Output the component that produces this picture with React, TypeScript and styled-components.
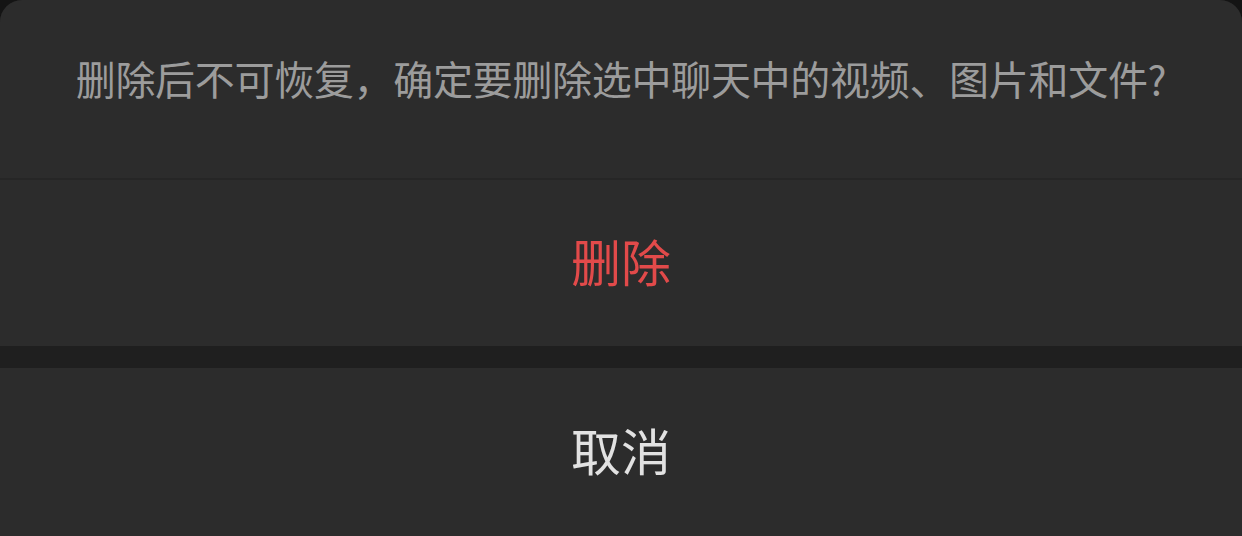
import React from "react";
import styled, { createGlobalStyle } from "styled-components";

const GlobalStyle = createGlobalStyle`
  html, body {
    margin: 0;
    padding: 0;
    background: #141414;
    font-family: "Noto Sans CJK SC", "Noto Sans", sans-serif;
  }
`;

const SSheet = styled.div`
  width: 1242px;
  height: 536px;
  display: flex;
  flex-direction: column;
  background: #1f1f1f;
  border-radius: 22px 22px 0 0;
  overflow: hidden;
`;

const SHeader = styled.div`
  height: 180px;
  flex-shrink: 0;
  display: flex;
  justify-content: center;
  align-items: flex-start;
  padding-top: 52px;
  box-sizing: border-box;
  background: #2c2c2c;
  border-bottom: 2px solid #262626;
  color: #9c9c9c;
  font-size: 40px;
  letter-spacing: -0.3px;
  line-height: 52px;
  white-space: nowrap;
`;

const SAction = styled.button<{ $danger?: boolean; $height: number }>`
  height: ${(p) => p.$height}px;
  flex-shrink: 0;
  border: none;
  margin: 0;
  padding: 0 0 6px;
  box-sizing: border-box;
  background: #2c2c2c;
  color: ${(p) => (p.$danger ? "#e24a4a" : "#e2e2e2")};
  font-family: inherit;
  font-size: 50px;
  display: flex;
  justify-content: center;
  align-items: center;
  cursor: pointer;
`;

const SGap = styled.div`
  height: 22px;
  flex-shrink: 0;
  background: #1f1f1f;
`;

export default function App() {
  return (
    <>
      <GlobalStyle />
      <SSheet>
        <SHeader>删除后不可恢复，确定要删除选中聊天中的视频、图片和文件?</SHeader>
        <SAction $danger $height={166}>删除</SAction>
        <SGap />
        <SAction $height={168}>取消</SAction>
      </SSheet>
    </>
  );
}
